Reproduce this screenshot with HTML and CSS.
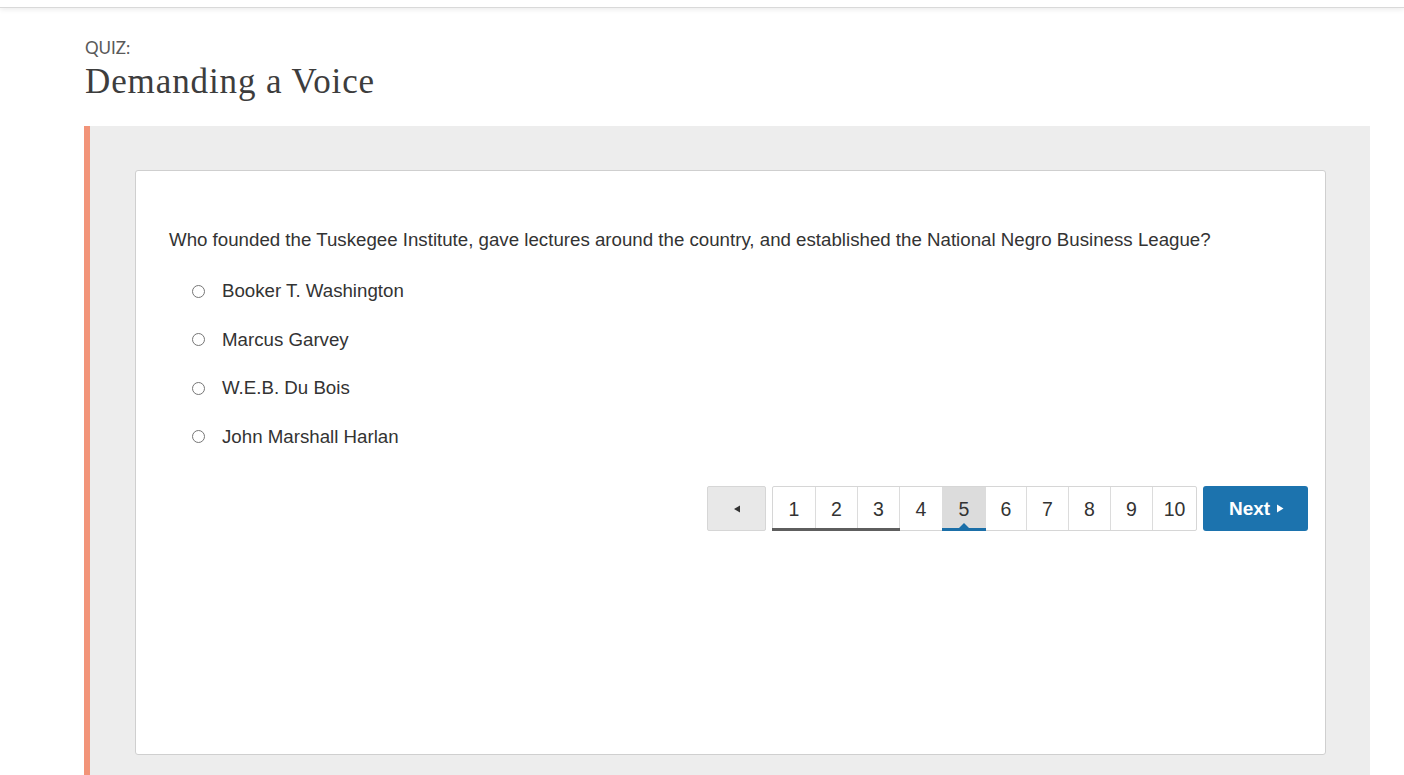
FILE: index.html
```html
<!DOCTYPE html>
<html>
<head>
<meta charset="utf-8">
<link rel="stylesheet" href="styles.css">
</head>
<body>
<div class="topbar"></div>
<main class="page">
  <header class="head">
    <div class="kicker">QUIZ:</div>
    <h1 class="title">Demanding a Voice</h1>
  </header>
  <section class="stage">
    <div class="card">
      <p class="question">Who founded the Tuskegee Institute, gave lectures around the country, and established the National Negro Business League?</p>
      <ul class="options">
        <li class="option"><span class="radio"></span><span>Booker T. Washington</span></li>
        <li class="option"><span class="radio"></span><span>Marcus Garvey</span></li>
        <li class="option"><span class="radio"></span><span>W.E.B. Du Bois</span></li>
        <li class="option"><span class="radio"></span><span>John Marshall Harlan</span></li>
      </ul>
      <nav class="pager">
        <button class="prev"><svg width="8" height="8" viewBox="0 0 8 8"><path d="M1 4 L7 0.5 L7 7.5 Z" fill="#333"/></svg></button>
        <div class="pages">
          <span class="pg done">1</span>
          <span class="pg done">2</span>
          <span class="pg done">3</span>
          <span class="pg">4</span>
          <span class="pg current">5</span>
          <span class="pg">6</span>
          <span class="pg">7</span>
          <span class="pg">8</span>
          <span class="pg">9</span>
          <span class="pg">10</span>
        </div>
        <button class="next">Next <svg width="8" height="9" viewBox="0 0 8 9"><path d="M1 0.5 L7.5 4.5 L1 8.5 Z" fill="#fff"/></svg></button>
      </nav>
    </div>
  </section>
</main>
</body>
</html>
```

FILE: styles.css
```css
* { box-sizing: border-box; }
html, body { margin: 0; padding: 0; background: #fff; }
body { font-family: "Liberation Sans", Arial, sans-serif; color: #333; overflow: hidden; height: 775px; }
.topbar {
  height: 8px;
  border-bottom: 1px solid #d9d9d9;
  box-shadow: 0 2px 5px rgba(0,0,0,0.07);
  background: #fff;
}
.page { padding: 0 34px 0 84px; }
.head { padding: 30px 0 0 1px; height: 118px; }
.kicker {
  font-family: Lato, "Open Sans", sans-serif;
  font-size: 17px;
  color: #5a5a5a;
  line-height: 20px;
  font-weight: 400;
}
.title {
  margin: 4px 0 0 0;
  font-family: "Liberation Serif", "Times New Roman", serif;
  font-weight: 400;
  font-size: 35px;
  line-height: 40px;
  color: #3d3d3d;
  letter-spacing: 0.9px;
}
.stage {
  background: #ededed;
  border-left: 6px solid #f29479;
  padding: 44px 44px 20px 45px;
  height: 660px;
}
.card {
  background: #fff;
  border: 1px solid #cfcfcf;
  border-radius: 3px;
  height: 585px;
  padding: 57px 17px 0 33px;
}
.question {
  margin: 0;
  font-size: 18.7px;
  line-height: 24px;
  color: #333;
}
.options {
  list-style: none;
  margin: 15px 0 0 0;
  padding: 0 0 0 23px;
}
.option {
  display: flex;
  align-items: center;
  height: 48.5px;
  font-size: 18.7px;
  color: #333;
}
.radio {
  width: 13px;
  height: 13px;
  border: 1px solid #767676;
  border-radius: 50%;
  margin-right: 17px;
  flex: none;
}
.pager {
  display: flex;
  justify-content: flex-end;
  align-items: stretch;
  margin-top: 25px;
  height: 45px;
}
.prev {
  width: 59px;
  background: #e8e8e8;
  border: 1px solid #d6d6d6;
  border-radius: 2px;
  margin-right: 6px;
  display: flex;
  align-items: center;
  justify-content: center;
  padding: 0;
}
.pages {
  display: flex;
  border: 1px solid #d6d6d6;
  border-radius: 2px;
}
.pg {
  position: relative;
  width: 42px;
  display: flex;
  align-items: center;
  justify-content: center;
  font-size: 19.5px;
  color: #333;
  border-right: 1px solid #dcdcdc;
  padding-top: 1px;
}
.pg:nth-child(1) { width: 43px; }
.pg:nth-child(4) { border-right: none; }
.pg:nth-child(5) { width: 44px; }
.pg:nth-child(6) { width: 41px; }
.pg:nth-child(10) { width: 43px; border-right: none; }
.pg.done::before {
  content: "";
  position: absolute;
  left: 0;
  right: -1px;
  bottom: -1px;
  height: 3px;
  background: #5e5e5e;
}
.pg.done:first-child::before { left: -1px; }
.pg.current { background: #dcdcdc; border-right: none; }
.pg.current::before {
  content: "";
  position: absolute;
  left: 0;
  right: 0;
  bottom: -1px;
  height: 3px;
  background: #1b6fa8;
}
.pg.current::after {
  content: "";
  position: absolute;
  left: 50%;
  bottom: 2px;
  margin-left: -5px;
  border-left: 5px solid transparent;
  border-right: 5px solid transparent;
  border-bottom: 5px solid #1b6fa8;
}
.next {
  margin-left: 6px;
  width: 105px;
  background: #1c73ae;
  color: #fff;
  border: none;
  border-radius: 3px;
  font-family: "Liberation Sans", Arial, sans-serif;
  font-weight: 700;
  font-size: 19px;
  display: flex;
  align-items: center;
  justify-content: center;
  gap: 6px;
  padding: 0 0 0 2px;
}
```
